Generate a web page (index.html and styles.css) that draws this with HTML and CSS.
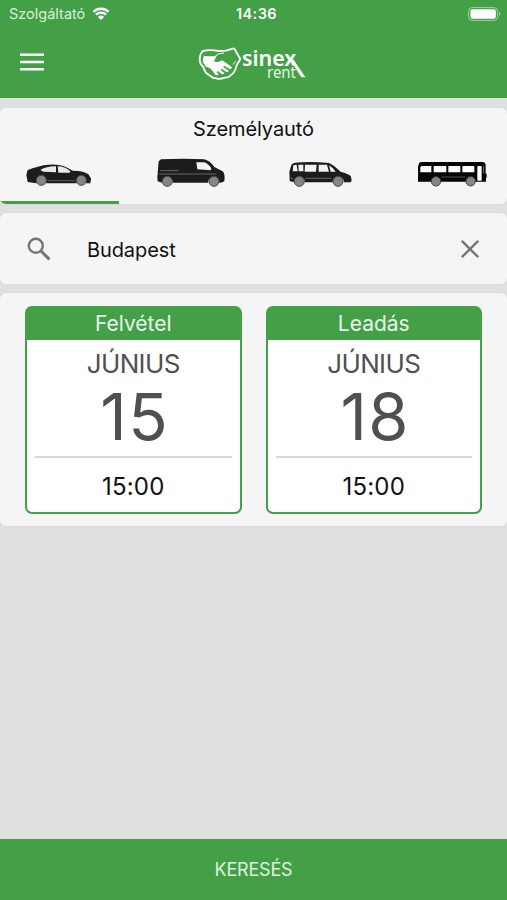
FILE: index.html
```
<!DOCTYPE html>
<html lang="hu">
<head>
<meta charset="UTF-8">
<meta name="viewport" content="width=device-width, initial-scale=1.0">
<title>Sinex Rent</title>
<link rel="stylesheet" href="styles.css">
</head>
<body>
    <header class="header">
        <div class="statusbar">
            <div class="carrier">
                <span>Szolgáltató</span>
                <svg class="wifi" width="18" height="14" viewBox="0 0 18 14">
                    <path d="M1.4 4.8a11 11 0 0 1 15.2 0M4 7.7a7.2 7.2 0 0 1 10 0" fill="none" stroke="#fff" stroke-width="2.3"/>
                    <path d="M5.9 9.9a4.5 4.5 0 0 1 6.2 0L9 13z" fill="#fff"/>
                </svg>
            </div>
            <span class="clock">14:36</span>
            <svg class="battery" width="33" height="14" viewBox="0 0 33 14">
                <rect x=".6" y=".6" width="29" height="12.8" rx="3.5" fill="none" stroke="#a1d0a3" stroke-width="1"/>
                <rect x="2.4" y="2.3" width="25.4" height="9.4" rx="2" fill="#fff"/>
                <path d="M31 5v4q1.4-.7 1.4-2T31 5z" fill="#a1d0a3"/>
            </svg>
        </div>
        <div class="toolbar">
            <button type="button" class="menu" aria-label="Menü">
                <svg width="24" height="18" viewBox="0 0 24 18">
                    <path d="M0 1.7h24M0 9.1h24M0 16.3h24" stroke="#fff" stroke-width="2.5"/>
                </svg>
            </button>
            <svg class="logo" width="125" height="50" viewBox="0 0 375 150">
                <path d="M38 39q22-5 48 0 12 0 22-1l24-7q4 4 7 12l12 20-11 19q-5 22-17 29-7 9-19 8-14 6-25 2-12 0-19-8-16-8-20-26-11-9-11-24 0-14 9-24z" fill="none" stroke="#fff" stroke-width="5.5" stroke-linejoin="round"/>
                <path d="M42 53q20 4 38 0l-8 17q10 6 24-3l13 8 17 13q1 6-7 5l-17-10-2 4 16 11q-1 6-7 4l-14-10-3 4 11 9q-3 6-9 2l-11-8-3 4 6 6q-4 5-10 1l-11-15q-6-7-17-9l-9-13q-2-12 3-20z" fill="#fff"/>
                <path d="M76 54q10-9 26-9M128 80l10-10" fill="none" stroke="#fff" stroke-width="3"/>
                <text class="logo-name" x="156" y="83" textLength="163" lengthAdjust="spacingAndGlyphs">sinex</text>
                <text class="logo-sub" x="231" y="120" textLength="87" lengthAdjust="spacingAndGlyphs">rent</text>
                <path d="M301 66l9-2 36 54h-12z" fill="#fff"/>
            </svg>
        </div>
    </header>

    <main class="content">
        <section class="card types">
            <div class="type-name">Személyautó</div>
            <div class="tabs">
                <button type="button" class="tab active" aria-label="Személyautó">
                    <svg width="110" height="58" viewBox="12 0 330 174">
                        <path d="M79 90l4-15q14-6 31-10 16-6 32-6 28-2 44 4 15 6 28 14 37 1 47 11l8 12-2 15h-12a16 16 0 0 0-30 0H139a16 16 0 0 0-30 0l-26-4z" fill="#1c1c1c"/>
                        <path d="M121 75q20-12 47-11v18l-38-2zM173 64q22 0 38 15l-2 4h-34z" fill="#e9e9e9"/>
                        <path d="M142 107h84" stroke="#777" stroke-width="2"/>
                        <g class="wheel"><circle cx="124" cy="106" r="15"/><circle cx="244" cy="106" r="15"/></g>
                    </svg>
                </button>
                <button type="button" class="tab" aria-label="Kisteherautó">
                    <svg width="110" height="58" viewBox="0 0 330 174">
                        <path d="M67 94l4-48 7-6q70-4 129 0 18 4 31 23l25 13q8 7 5 30l-10 4h-5a17 17 0 0 0-34 0H114a17 17 0 0 0-34 0l-12-4z" fill="#1c1c1c"/>
                        <path d="M184 49h23q13 4 22 18l-2 6-40-3z" fill="#f2f2f2"/>
                        <path d="M76 74h54M72 84h172" fill="none" stroke="#777" stroke-width="2.5"/>
                        <g class="wheel"><circle cx="97" cy="106" r="15"/><circle cx="237" cy="106" r="15"/></g>
                    </svg>
                </button>
                <button type="button" class="tab" aria-label="Egyterű">
                    <svg width="110" height="58" viewBox="-12 0 330 174">
                        <path d="M58 77l7-22 9-5q50-4 103 1 18 8 35 26 21 5 30 13l3 12-3 7h-20a17 17 0 0 0-34 0H105a17 17 0 0 0-34 0l-12-4z" fill="#1c1c1c"/>
                        <path d="M70 58l10-2 3 20H68zM85 56h15v20H86zM105 56h35l-2 21h-34zM146 56h25l6 21h-31zM177 58q11 6 20 19h-15z" fill="#f2f2f2"/>
                        <path d="M62 97h7M106 97h78" stroke="#777" stroke-width="2.5"/>
                        <g class="wheel"><circle cx="88" cy="106" r="15"/><circle cx="204" cy="106" r="15"/></g>
                    </svg>
                </button>
                <button type="button" class="tab" aria-label="Busz">
                    <svg width="110" height="58" viewBox="0 0 330 174">
                        <path d="M63 65q1-17 10-17h184q9 1 9 10v25h3v12h-2v12H63z" fill="#050505"/>
                        <g fill="#fff">
                            <path d="M74 60h29v19H70V64z"/>
                            <rect x="110" y="60" width="38" height="19" rx="2"/>
                            <rect x="154" y="60" width="36" height="19" rx="2"/>
                            <rect x="196" y="60" width="36" height="19" rx="2"/>
                            <rect x="241" y="60" width="13" height="44" rx="2"/>
                        </g>
                        <path d="M134 93h70" stroke="#777" stroke-width="2"/>
                        <path d="M260 60v22" stroke="#aaa" stroke-width="2"/>
                        <g class="wheel"><circle cx="117" cy="106" r="14"/><circle cx="221" cy="106" r="14"/></g>
                    </svg>
                </button>
            </div>
        </section>

        <section class="card search">
            <svg class="search-icon" width="24" height="24" viewBox="0 0 24 24">
                <circle cx="8.8" cy="8.8" r="7" fill="none" stroke="#757575" stroke-width="2.4"/>
                <path d="M14 14l8.4 8.4" stroke="#757575" stroke-width="3"/>
            </svg>
            <span class="city">Budapest</span>
            <svg class="clear" width="20" height="20" viewBox="0 0 20 20">
                <path d="M1.8 1.8l16.4 16.4M18.2 1.8L1.8 18.2" stroke="#757575" stroke-width="2.4"/>
            </svg>
        </section>

        <section class="card dates">
            <div class="date-box">
                <div class="date-title">Felvétel</div>
                <div class="month">JÚNIUS</div>
                <div class="day">15</div>
                <div class="time">15:00</div>
            </div>
            <div class="date-box">
                <div class="date-title">Leadás</div>
                <div class="month">JÚNIUS</div>
                <div class="day">18</div>
                <div class="time">15:00</div>
            </div>
        </section>
    </main>

    <button type="button" class="submit">KERESÉS</button>
</body>
</html>
```
FILE: styles.css
```
* {
    box-sizing: border-box;
}

body {
    margin: 0;
    height: 900px;
    display: flex;
    flex-direction: column;
    overflow: hidden;
    font-family: Inter, "Liberation Sans", sans-serif;
    background-color: #e0e0e0;
    color: #111;
}

button {
    padding: 0;
    border: none;
    background: none;
    font-family: inherit;
    cursor: pointer;
}

.header {
    height: 98px;
    background-color: #43a047;
    color: #fff;
}

.statusbar {
    height: 27px;
    display: grid;
    grid-template-columns: 1fr auto 1fr;
    align-items: center;
    padding: 0 6px 0 9px;
    font-size: 14.5px;
}

.carrier {
    display: flex;
    align-items: center;
    gap: 7px;
    color: #d9f0da;
}

.clock {
    padding-left: 3px;
    font-weight: 600;
    letter-spacing: 0.4px;
}

.battery {
    justify-self: end;
}

.toolbar {
    height: 71px;
    display: grid;
    grid-template-columns: 190px 125px;
    padding-top: 11px;
}

.menu {
    width: 24px;
    height: 18px;
    margin: 15px 0 0 20px;
}

.menu svg {
    display: block;
}

.logo-name {
    font: 600 67px "Noto Sans", sans-serif;
    fill: #fff;
}

.logo-sub {
    font: 400 46px "Noto Sans", sans-serif;
    fill: #e3f3e3;
}

.content {
    flex: 1;
    display: flex;
    flex-direction: column;
    gap: 9px;
    padding-top: 10px;
}

.card {
    background-color: #f5f5f5;
    border-radius: 6px;
    box-shadow: 0 0 2px rgba(0, 0, 0, 0.08);
}

.types {
    height: 96px;
    overflow: hidden;
}

.type-name {
    height: 37px;
    padding-top: 8px;
    line-height: 26px;
    text-align: center;
    font-size: 20px;
    letter-spacing: -0.1px;
}

.tabs {
    display: grid;
    grid-template-columns: repeat(4, 119px);
    gap: 12px;
}

.tab {
    height: 59px;
    padding-left: 4px;
    text-align: left;
}

.tab svg {
    display: block;
    height: 58px;
}

.tab.active {
    border-bottom: 3px solid #43a047;
}

.wheel {
    fill: #858585;
    stroke: #444;
    stroke-width: 3;
}

.search {
    height: 71px;
    display: flex;
    align-items: center;
    padding: 0 27px;
}

.city {
    flex: 1;
    margin-left: 36px;
    padding-top: 2px;
    font-size: 20px;
    letter-spacing: -0.1px;
}

.dates {
    height: 233px;
    display: flex;
    gap: 24px;
    padding: 13px 25px 12px;
}

.date-box {
    width: 217px;
    height: 208px;
    border: 2px solid #43a047;
    border-radius: 7px;
    background-color: #fff;
    text-align: center;
    color: #505050;
}

.date-title {
    height: 32px;
    line-height: 31px;
    background-color: #43a047;
    color: #eaf6ea;
    font-size: 21px;
}

.month {
    height: 46px;
    line-height: 47px;
    font-size: 26px;
    letter-spacing: -0.6px;
}

.day {
    height: 72px;
    margin: 0 8px;
    padding-left: 3px;
    line-height: 61px;
    border-bottom: 2px solid #d8d8d8;
    font-size: 65px;
    letter-spacing: 1.5px;
}

.time {
    line-height: 58px;
    height: 52px;
    font-size: 24px;
    letter-spacing: 0.2px;
    color: #111;
}

.submit {
    height: 61px;
    background-color: #43a047;
    color: #dff2df;
    font-size: 18px;
    letter-spacing: -0.2px;
}
```
